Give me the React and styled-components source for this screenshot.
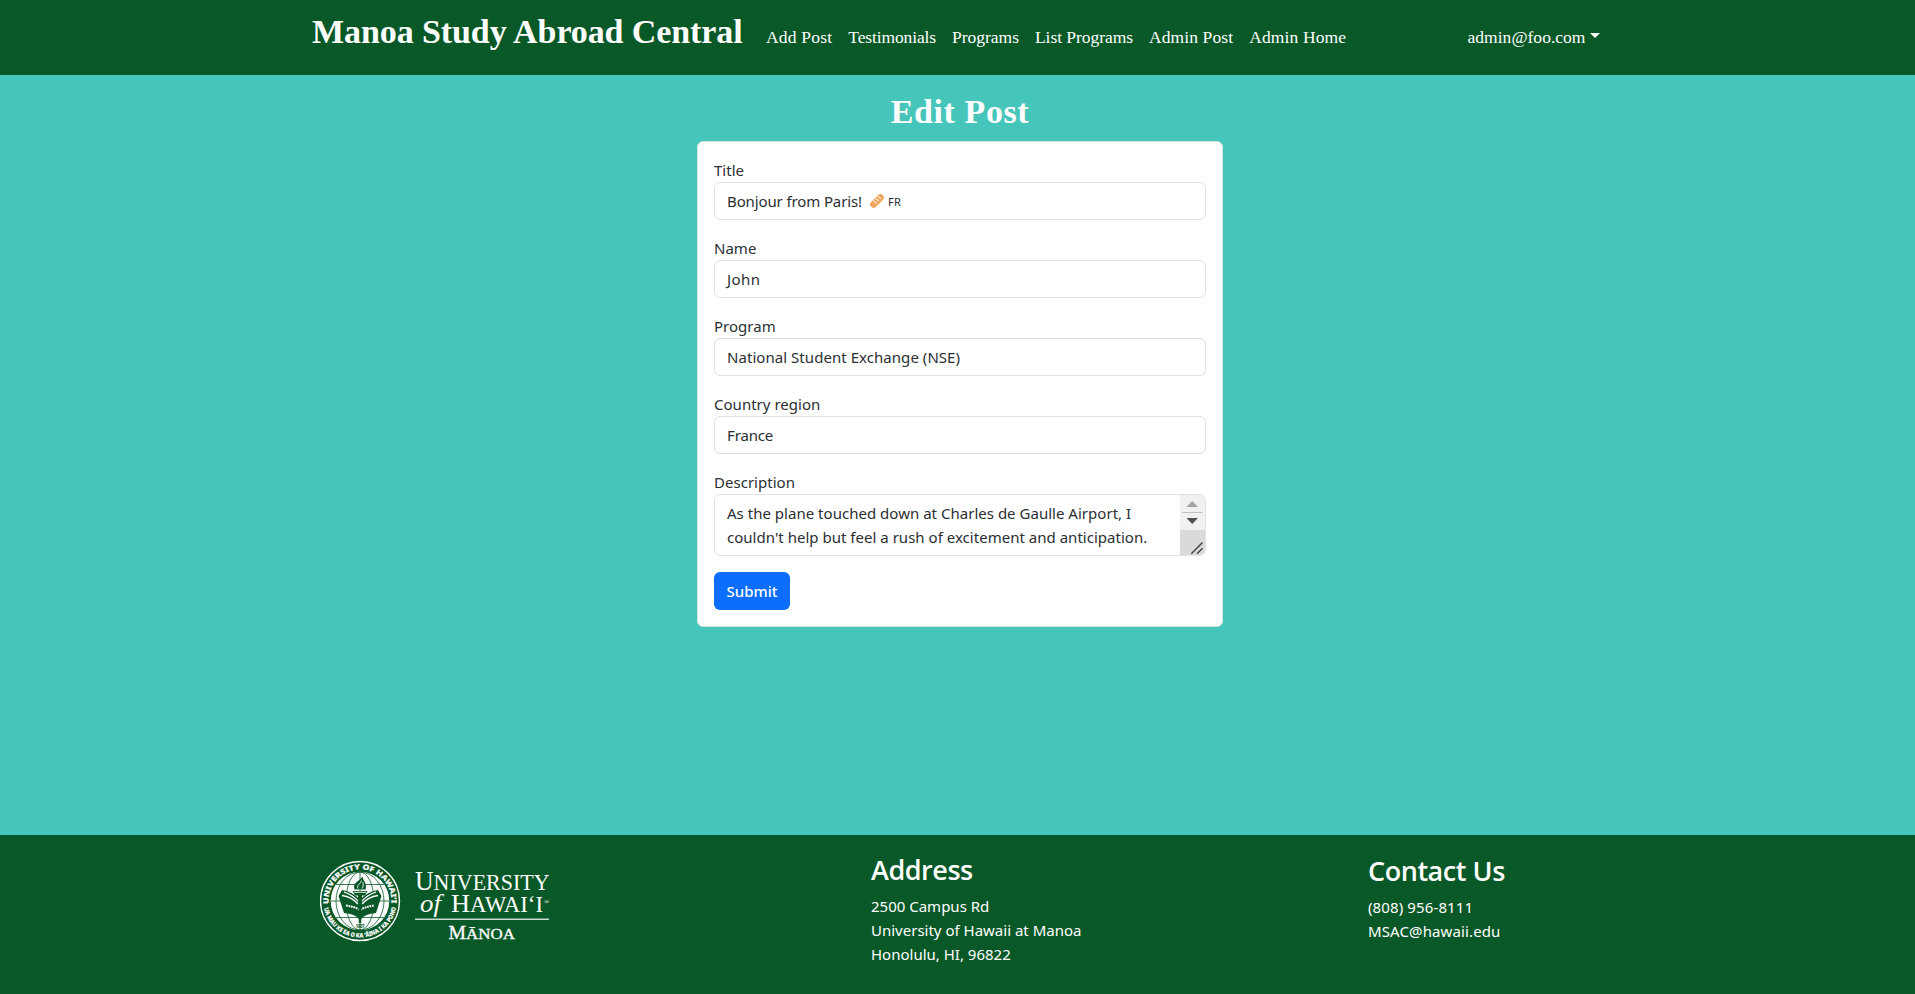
import React from "react";
import styled, { createGlobalStyle } from "styled-components";

const GREEN = "#095828";
const TEAL = "#46c5ba";
const SERIF = '"Liberation Serif", "Times New Roman", serif';
const SANS = '"Noto Sans", "Open Sans", sans-serif';

const GlobalStyle = createGlobalStyle`
  *, *::before, *::after { box-sizing: border-box; }
  body {
    margin: 0;
    background: ${TEAL};
    color: #2b2f33;
    font: 400 15px/24px ${SANS};
    letter-spacing: 0.02px;
  }
`;

const Page = styled.div`
  display: flex;
  flex-direction: column;
  min-height: 994px;
`;

const Navbar = styled.header`
  display: flex;
  align-items: baseline;
  height: 75px;
  padding: 12px 312px 0;
  background: ${GREEN};
  color: #fff;
  font-family: ${SERIF};
`;

const Brand = styled.a`
  width: 446px;
  font-size: 34px;
  font-weight: 700;
  line-height: 40px;
  letter-spacing: -0.09px;
  white-space: nowrap;
`;

const Nav = styled.nav`
  display: flex;
  flex: 1;
`;

const NavItem = styled.a`
  padding: 0 8px;
  font-size: 17.5px;
  letter-spacing: ${(p) => p.$spacing || 0}px;
  white-space: nowrap;
`;

const UserMenu = styled.a`
  display: flex;
  gap: 4px;
  margin-right: 3.5px;
  font-size: 17.5px;
`;

const Caret = styled.span`
  margin-top: 8px;
  width: 0;
  height: 0;
  border: 5px solid transparent;
  border-top-color: #fff;
  border-bottom: 0;
`;

const Main = styled.main`
  display: flex;
  flex: 1;
  flex-direction: column;
  align-items: center;
  padding: 17px 0 0 5px;
`;

const Heading = styled.h2`
  margin: 0 0 9px;
  font: 700 34px/40px ${SERIF};
  letter-spacing: 0.6px;
  color: #fff;
`;

const Card = styled.form`
  width: 526px;
  padding: 16px;
  background: #fff;
  border: 1px solid #d3e3e2;
  border-radius: 6px;
`;

const Field = styled.div`
  display: flex;
  flex-direction: column;
  margin-bottom: 16px;
`;

const Label = styled.label`
  height: 24px;
`;

const Control = styled.div`
  display: flex;
  align-items: center;
  height: ${(p) => (p.$tall ? 62 : 38)}px;
  padding-left: 12px;
  border: 1px solid #dee2e6;
  border-radius: 6px;
  letter-spacing: ${(p) => p.$spacing || 0.02}px;
  overflow: hidden;
`;

const Description = styled.p`
  flex: 1;
  margin: 0;
  white-space: pre;
`;

const Region = styled.span`
  margin-left: 4px;
  font-size: 11px;
  line-height: 26px;
  letter-spacing: 0.4px;
  padding-top: 2px;
`;

const Submit = styled.button`
  display: block;
  width: 76px;
  height: 38px;
  padding: 0;
  border: 0;
  border-radius: 6px;
  background: #0d6efd;
  color: #fff;
  font: 500 15px/24px ${SANS};
`;

const Footer = styled.footer`
  display: grid;
  grid-template-columns: 551px 497px 1fr;
  height: 159px;
  padding: 18px 0 0 320px;
  background: ${GREEN};
  color: #fff;
`;

const FooterColumn = styled.section`
  padding-top: ${(p) => p.$offset || 0}px;
`;

const FooterTitle = styled.h3`
  margin: 0 0 8px;
  font: 600 27px/33px "Open Sans", sans-serif;
  letter-spacing: -0.45px;
`;

const Line = styled.div`
  letter-spacing: ${(p) => p.$spacing || 0}px;
`;

const Logo = styled.svg`
  display: block;
  margin-top: 7px;
`;

const Scrollbar = styled.svg`
  display: block;
  flex: none;
`;

const Baguette = styled.svg`
  display: block;
  margin-left: 8px;
`;

function BaguetteIcon() {
  return (
    <Baguette width="14" height="14" viewBox="0 0 14 14">
      <path d="M3.6 10.4 10.4 3.6" stroke="#f0a35b" strokeWidth="6.8" strokeLinecap="round" />
      <path d="M3.8 6.9 6.2 9M6 4.6 8.5 6.8M8.3 2.4l2.4 2.2" stroke="#fff0d8" strokeWidth="1.2" strokeLinecap="round" />
    </Baguette>
  );
}

function ScrollbarParts() {
  return (
    <Scrollbar width="25" height="60" viewBox="0 0 25 60">
      <rect width="25" height="35" fill="#f1f1f1" />
      <rect y="35" width="25" height="25" fill="#dadada" />
      <path d="M6.5 12 12.2 6 18 12Z" fill="#a3a3a3" />
      <path d="M2 17.5h20.5" stroke="#c1c1c1" />
      <path d="M6.5 23h11.5l-5.8 6Z" fill="#505050" />
      <path d="M11.3 58.7 22.5 47.5M17 58.7l5.5-5.5" stroke="#444" strokeWidth="1.5" />
    </Scrollbar>
  );
}

function UniversityLogo() {
  return (
    <Logo width="235" height="84" viewBox="0 0 235 84" fill="#fff" fontFamily={SERIF}>
      <defs>
        <path id="ringTop" d="M8.900 46A31.500 31.500 0 1 1 71.100 46" />
        <path id="ringBottom" d="M3.700 46.200A36.700 36.700 0 0 0 76.300 46.200" />
      </defs>
      <circle cx="40" cy="41" r="39.5" fill="none" stroke="#fff" strokeWidth="1.4" />
      <circle cx="40" cy="41" r="29.3" />
      <g fill="none" stroke={GREEN} strokeWidth="0.8">
        <path d="M40 12v58M11 41h58M16 24.500h48M16 57.500h48" />
        <ellipse cx="40" cy="41" rx="14" ry="29" />
        <ellipse cx="40" cy="41" rx="24" ry="29" />
      </g>
      <g fontFamily={SANS} fontWeight="800" fontSize="7.2" stroke="#fff" strokeWidth="0.2">
        <text>
          <textPath href="#ringTop" startOffset="2" textLength="104" lengthAdjust="spacingAndGlyphs">UNIVERSITY OF HAWAIʻI</textPath>
        </text>
        <text fontSize="6">
          <textPath href="#ringBottom" startOffset="2" textLength="101" lengthAdjust="spacingAndGlyphs">UA MAU KE EA O KA ʻĀINA I KA PONO</textPath>
        </text>
      </g>
      <path d="M22 30Q33 32 40 39.500Q47 32 58 30L61.500 36L56 53Q45 53.500 40 60Q35 53.500 24 53L18.500 36Z" fill={GREEN} />
      <path d="M24 32Q33 35 39 42M22 35.500Q32 37 38 44M56 32Q47 35 41 42M58 35.500Q48 37 42 44" fill="none" stroke="#fff" strokeWidth="1.300" />
      <path d="M26 45.500Q34 46.500 40 50Q46 46.500 54 45.500" fill="none" stroke="#fff" strokeWidth="2" strokeDasharray="1.800 .7" />
      <path d="M32.500 31h15l-2.500 4.500h-3L41.200 63h-2.400L38 35.500H35Z" fill={GREEN} />
      <path d="M34.500 29.500C32.500 22 39 22 42.500 16.500C43 21 47.500 23 45.500 29.500Z" fill={GREEN} />
      <path d="M38 28.500C36.500 25 40.500 24 41.500 20.500M42 28.500C44 26 43 24 42.800 22M34 32.300h12" fill="none" stroke="#fff" strokeWidth="0.9" />
      <text x="35.500" y="67.500" fontSize="4.500" fontWeight="700" fill={GREEN} fontFamily={SANS} textLength="9">1907</text>
      <text x="95" y="29.500" fontSize="27" textLength="134.500" lengthAdjust="spacingAndGlyphs">
        U<tspan fontSize="23">NIVERSITY</tspan>
      </text>
      <text x="100" y="52" fontSize="25" fontStyle="italic" textLength="21" lengthAdjust="spacingAndGlyphs">of</text>
      <text x="131" y="52" fontSize="26" textLength="92" lengthAdjust="spacingAndGlyphs">
        H<tspan fontSize="22.500">AWAIʻI</tspan>
      </text>
      <text x="224" y="43.500" fontSize="7">®</text>
      <rect x="95" y="58.500" width="134" height="1.500" fill="#c5dccd" />
      <text x="128.500" y="79" fontSize="18" stroke="#fff" strokeWidth="0.3" textLength="66.500" lengthAdjust="spacingAndGlyphs">
        M<tspan fontSize="15.500">ĀNOA</tspan>
      </text>
    </Logo>
  );
}

const navItems = [
  ["Add Post", 0.2],
  ["Testimonials", -0.12],
  ["Programs", -0.02],
  ["List Programs", -0.05],
  ["Admin Post", 0.1],
  ["Admin Home", 0.13],
];

const fields = [
  ["Name", "John", 0.4],
  ["Program", "National Student Exchange (NSE)", 0.05],
  ["Country region", "France", -0.15],
];

export default function App() {
  return (
    <Page>
      <GlobalStyle />
      <Navbar>
        <Brand>Manoa Study Abroad Central</Brand>
        <Nav>
          {navItems.map(([name, spacing]) => (
            <NavItem key={name} $spacing={spacing}>{name}</NavItem>
          ))}
        </Nav>
        <UserMenu>admin@foo.com<Caret /></UserMenu>
      </Navbar>
      <Main>
        <Heading>Edit Post</Heading>
        <Card>
          <Field>
            <Label>Title</Label>
            <Control $spacing={-0.12}>
              Bonjour from Paris!
              <BaguetteIcon />
              <Region>FR</Region>
            </Control>
          </Field>
          {fields.map(([label, value, spacing]) => (
            <Field key={label}>
              <Label>{label}</Label>
              <Control $spacing={spacing}>{value}</Control>
            </Field>
          ))}
          <Field>
            <Label>Description</Label>
            <Control $tall>
              <Description>
                {"As the plane touched down at Charles de Gaulle Airport, I\ncouldn't help but feel a rush of excitement and anticipation."}
              </Description>
              <ScrollbarParts />
            </Control>
          </Field>
          <Submit type="button">Submit</Submit>
        </Card>
      </Main>
      <Footer>
        <UniversityLogo />
        <FooterColumn>
          <FooterTitle>Address</FooterTitle>
          <Line>2500 Campus Rd</Line>
          <Line>University of Hawaii at Manoa</Line>
          <Line>Honolulu, HI, 96822</Line>
        </FooterColumn>
        <FooterColumn $offset={1}>
          <FooterTitle>Contact Us</FooterTitle>
          <Line $spacing={0.12}>(808) 956-8111</Line>
          <Line $spacing={0.12}>MSAC@hawaii.edu</Line>
        </FooterColumn>
      </Footer>
    </Page>
  );
}
